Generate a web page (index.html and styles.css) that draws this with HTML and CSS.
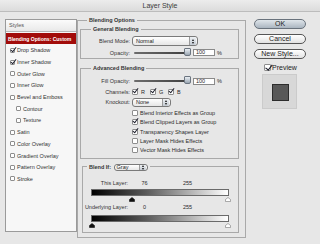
FILE: index.html
```html
<!DOCTYPE html>
<html lang="en">
<head>
    <meta charset="UTF-8">
    <title>Layer Style</title>
    <link rel="stylesheet" href="styles.css">
</head>
<body>
<div class="dialog">
    <div class="titlebar">Layer Style</div>

    <div class="main">
        <!-- lista de estilos -->
        <div class="styles">
            <div class="styles-head">Styles</div>
            <div class="style-item active">Blending Options: Custom</div>
            <div class="style-item"><span class="cb on"></span>Drop Shadow</div>
            <div class="style-item"><span class="cb on"></span>Inner Shadow</div>
            <div class="style-item"><span class="cb"></span>Outer Glow</div>
            <div class="style-item"><span class="cb"></span>Inner Glow</div>
            <div class="style-item"><span class="cb"></span>Bevel and Emboss</div>
            <div class="style-item sub"><span class="cb"></span>Contour</div>
            <div class="style-item sub"><span class="cb"></span>Texture</div>
            <div class="style-item"><span class="cb"></span>Satin</div>
            <div class="style-item"><span class="cb"></span>Color Overlay</div>
            <div class="style-item"><span class="cb"></span>Gradient Overlay</div>
            <div class="style-item"><span class="cb"></span>Pattern Overlay</div>
            <div class="style-item"><span class="cb"></span>Stroke</div>
        </div>

        <!-- opciones de fusion -->
        <fieldset class="group blending">
            <legend>Blending Options</legend>

            <fieldset class="group general">
                <legend>General Blending</legend>
                <div class="row tall">
                    <span class="label">Blend Mode:</span>
                    <span class="select mode">Normal<span class="stepper"><i class="up"></i><i class="down"></i></span></span>
                </div>
                <div class="row">
                    <span class="label">Opacity:</span>
                    <span class="slider"></span>
                    <span class="num">100</span><span class="pct">%</span>
                </div>
            </fieldset>

            <fieldset class="group advanced">
                <legend>Advanced Blending</legend>
                <div class="row">
                    <span class="label">Fill Opacity:</span>
                    <span class="slider"></span>
                    <span class="num">100</span><span class="pct">%</span>
                </div>
                <div class="row channels">
                    <span class="label">Channels:</span>
                    <span class="chan"><span class="cb on"></span>R</span>
                    <span class="chan"><span class="cb on"></span>G</span>
                    <span class="chan"><span class="cb on"></span>B</span>
                </div>
                <div class="row">
                    <span class="label">Knockout:</span>
                    <span class="select knock">None<span class="stepper"><i class="up"></i><i class="down"></i></span></span>
                </div>
                <div class="options">
                    <div class="opt"><span class="cb"></span>Blend Interior Effects as Group</div>
                    <div class="opt"><span class="cb on"></span>Blend Clipped Layers as Group</div>
                    <div class="opt"><span class="cb on"></span>Transparency Shapes Layer</div>
                    <div class="opt"><span class="cb"></span>Layer Mask Hides Effects</div>
                    <div class="opt"><span class="cb"></span>Vector Mask Hides Effects</div>
                </div>
            </fieldset>

            <fieldset class="group blendif">
                <legend>Blend If: <span class="select gray">Gray<span class="stepper"><i class="up"></i><i class="down"></i></span></span></legend>
                <div class="range-row">
                    <span class="range-label">This Layer:</span>
                    <span class="v1">76</span><span class="v2">255</span>
                </div>
                <div class="ramp"></div>
                <div class="marks">
                    <svg class="mark" style="left: 38px" width="6" height="5" viewBox="0 0 6 5"><path d="M3 0.5 5.5 2.5V4.5H0.5V2.5Z" fill="#111" stroke="#111" stroke-width="0.6"/></svg>
                    <svg class="mark" style="left: 134px" width="6" height="5" viewBox="0 0 6 5"><path d="M3 0.5 5.5 2.5V4.5H0.5V2.5Z" fill="#fff" stroke="#777" stroke-width="0.6"/></svg>
                </div>
                <div class="range-row">
                    <span class="range-label">Underlying Layer:</span>
                    <span class="v1">0</span><span class="v2">255</span>
                </div>
                <div class="ramp"></div>
                <div class="marks">
                    <svg class="mark" style="left: -2px" width="6" height="5" viewBox="0 0 6 5"><path d="M3 0.5 5.5 2.5V4.5H0.5V2.5Z" fill="#111" stroke="#111" stroke-width="0.6"/></svg>
                    <svg class="mark" style="left: 134px" width="6" height="5" viewBox="0 0 6 5"><path d="M3 0.5 5.5 2.5V4.5H0.5V2.5Z" fill="#fff" stroke="#777" stroke-width="0.6"/></svg>
                </div>
            </fieldset>
        </fieldset>

        <!-- botones -->
        <div class="actions">
            <div class="btn default">OK</div>
            <div class="btn">Cancel</div>
            <div class="btn">New Style...</div>
            <div class="preview"><span class="cb big on"></span>Preview</div>
            <div class="swatch"><div class="swatch-inner"></div></div>
        </div>
    </div>
</div>
</body>
</html>
```

FILE: styles.css
```css
/* Estilos generales */
* {
    box-sizing: border-box;
}

body {
    margin: 0;
    background: #e7e7e7;
    font-family: "Liberation Sans", Arial, sans-serif;
    font-size: 5.5px;
    color: #2a2a2a;
}

.dialog {
    width: 320px;
    height: 244px;
    overflow: hidden;
}

.titlebar {
    height: 12px;
    line-height: 11px;
    text-align: center;
    font-size: 7px;
    color: #3c3c3c;
    background: linear-gradient(#ececec, #dcdcdc);
    border-bottom: 1px solid #bcbcbc;
}

.main {
    display: flex;
    align-items: flex-start;
    padding: 4px 0 0 5px;
}

/* --- LISTA DE ESTILOS --- */
.styles {
    width: 72px;
    height: 213px;
    margin-top: 3px;
    background: #f7f7f7;
    border: 1px solid #9a9a9a;
}

.styles-head {
    height: 12px;
    line-height: 11px;
    padding-left: 3px;
    color: #555;
    background: linear-gradient(#fbfbfb, #e9e9e9);
    border-bottom: 1px solid #b6b6b6;
}

.style-item {
    display: flex;
    align-items: center;
    gap: 2px;
    height: 11.7px;
    padding-left: 4px;
    color: #333;
    white-space: nowrap;
}

.style-item.active {
    height: 11px;
    margin: 1px 0 0.5px;
    padding-left: 2px;
    background: #a20c0a;
    color: #fff;
    font-size: 5.1px;
    font-weight: bold;
    letter-spacing: -0.05px;
}

.style-item.sub {
    padding-left: 10px;
}

/* casillas */
.cb {
    position: relative;
    flex: none;
    width: 5px;
    height: 5px;
    background: #fff;
    border: 1px solid #8e8e8e;
    border-radius: 1px;
}

.cb.on::after {
    content: "";
    position: absolute;
    left: 1px;
    top: -3px;
    width: 2px;
    height: 5px;
    border: solid #1b1d2a;
    border-width: 0 1.5px 1.5px 0;
    transform: rotate(38deg);
}

.cb.big {
    width: 7px;
    height: 7px;
}

.cb.big::after {
    left: 2px;
    top: -2px;
    width: 2.5px;
    height: 6px;
}

/* --- GRUPOS --- */
fieldset.group {
    margin: 0;
    padding: 0;
    min-width: 0;
    border: 1px solid #a9a9a9;
}

fieldset.group > legend {
    padding: 0 2px;
    line-height: 8px;
    font-weight: bold;
    color: #333;
}

.blending {
    width: 169px;
    margin-left: 8px;
    padding: 1px 6px 4px 2px !important;
}

.blending > legend {
    margin-left: 7px;
}

.general,
.advanced {
    padding: 2px 0 0 4px !important;
}

.general > legend,
.advanced > legend {
    margin-left: 6px;
}

.advanced {
    margin-top: 5px !important;
    padding-top: 4px !important;
    padding-bottom: 3px !important;
}

.row {
    display: flex;
    align-items: center;
    height: 10px;
    white-space: nowrap;
}

.general .row {
    height: 11px;
}

.general .row.tall {
    height: 12px;
}

.channels {
    height: 11px !important;
}

.label {
    width: 45px;
    margin-right: 2px;
    text-align: right;
    color: #333;
}

/* menus desplegables */
.select {
    display: inline-flex;
    align-items: center;
    justify-content: space-between;
    height: 10px;
    padding: 0 1px 0 3px;
    background: linear-gradient(#ffffff, #e6e6e6);
    border: 1px solid #7a7a7a;
    border-radius: 3px;
    font-weight: normal;
    color: #222;
    vertical-align: middle;
}

.select.mode {
    width: 66px;
}

.select.knock {
    width: 39px;
    height: 9px;
}

.select.gray {
    width: 34px;
    height: 7.5px;
    padding-left: 2px;
    margin-left: 1px;
}

.stepper {
    display: flex;
    flex-direction: column;
    align-items: center;
    justify-content: center;
    gap: 1px;
    width: 7px;
    height: 100%;
    margin: 1px 0;
    background: linear-gradient(#eef1f4, #c3cad2);
    border-left: 1px solid #9a9a9a;
    border-radius: 0 2px 2px 0;
}

.stepper i {
    width: 0;
    height: 0;
    border-left: 1.5px solid transparent;
    border-right: 1.5px solid transparent;
}

.stepper .up {
    border-bottom: 2px solid #111;
}

.stepper .down {
    border-top: 2px solid #111;
}

/* deslizadores */
.slider {
    position: relative;
    width: 56px;
    height: 2px;
    margin-left: 2px;
    background: linear-gradient(90deg, #6d6d6d, #3e3e3e);
    border-radius: 1px;
}

.slider::after {
    content: "";
    position: absolute;
    right: -1px;
    top: -4px;
    width: 5px;
    height: 6px;
    background: linear-gradient(#e9eef3, #9aa6b2);
    border: 1px solid #6c7580;
    border-radius: 1px 1px 2px 2px;
}

.num {
    width: 22px;
    height: 7px;
    margin-left: 3px;
    padding-left: 2px;
    line-height: 5px;
    background: #fff;
    border: 1px solid #8a8a8a;
}

.pct {
    margin-left: 2px;
}

.chan {
    display: flex;
    align-items: center;
    gap: 3px;
    width: 18px;
}

.chan .cb,
.opt .cb {
    width: 6px;
    height: 6px;
}

.options {
    margin-top: 1.3px;
    padding-left: 47px;
}

.opt {
    display: flex;
    align-items: center;
    gap: 2px;
    height: 9.3px;
    white-space: nowrap;
}

/* --- BLEND IF --- */
.blendif {
    width: 157px;
    margin: 4px 0 0 2px !important;
    padding: 8px 9px 4px 2px !important;
}

.blendif > legend {
    margin-left: 2px;
}

.range-row {
    display: flex;
    align-items: center;
    height: 8px;
    white-space: nowrap;
}

.range-row + .ramp {
    margin-top: 2px;
}

.marks + .range-row {
    margin-top: 1px;
}

.range-label {
    display: flex;
    justify-content: flex-end;
    width: 43px;
    color: #333;
}

.v1 {
    width: 33px;
    text-align: center;
}

.v2 {
    width: 53px;
    text-align: center;
}

.ramp {
    width: 138px;
    height: 7px;
    margin-left: 6px;
    background: linear-gradient(90deg, #000 0%, #5a5a5a 40%, #c8c8c8 80%, #fff 100%);
    border: 1px solid #6a6a6a;
}

.marks + .range-row + .ramp {
    margin-top: 4px;
}

.marks {
    position: relative;
    height: 6px;
    margin-left: 6px;
}

.mark {
    position: absolute;
    top: 0.5px;
    display: block;
}

/* --- BOTONES --- */
.actions {
    width: 52px;
    margin: 3px 0 0 8px;
}

.btn {
    height: 9.5px;
    margin-bottom: 5.5px;
    line-height: 7.5px;
    text-align: center;
    font-size: 7px;
    color: #1e1e1e;
    background: linear-gradient(#ffffff, #e2e2e2);
    border: 1px solid #555;
    border-radius: 5px;
}

.btn.default {
    background: linear-gradient(#dfe5ea, #aab5c0);
    border-color: #69727c;
}

.preview {
    display: flex;
    align-items: center;
    gap: 1px;
    height: 7px;
    margin: 1px 0 0 10px;
    font-size: 7px;
    color: #222;
}

.swatch {
    width: 35px;
    height: 35px;
    margin: 3px 0 0 8px;
    padding: 9px;
    background: #d8d8d8;
    border: 1px solid #cbcbcb;
}

.swatch-inner {
    width: 17px;
    height: 17px;
    background: #585858;
    border: 1px solid #2c2c2c;
}
```
